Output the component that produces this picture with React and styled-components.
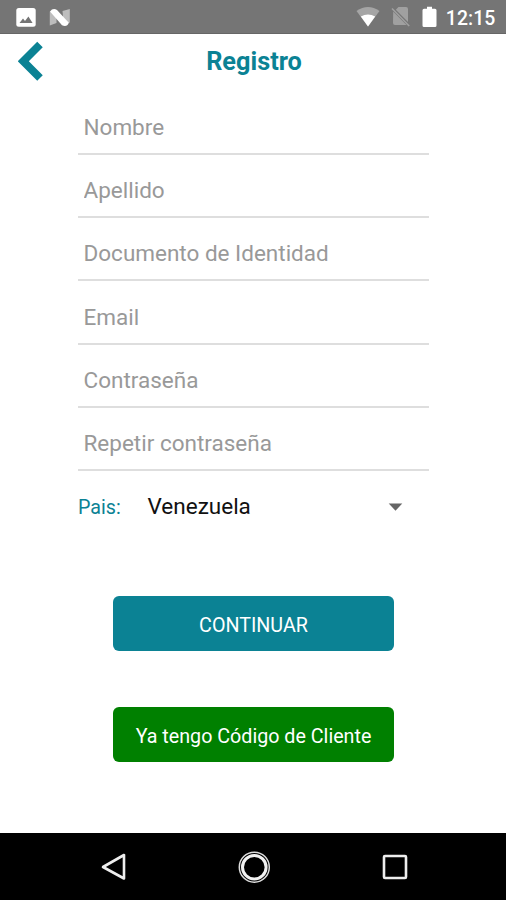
import React, { useState } from 'react';
import styled, { createGlobalStyle } from 'styled-components';

const teal = '#0b8294';

const GlobalStyle = createGlobalStyle`
  * { box-sizing: border-box; }
  body { margin: 0; background: #fff; font-family: Roboto, sans-serif; }
`;

const Screen = styled.div`
  width: 506px;
  height: 900px;
  display: flex;
  flex-direction: column;
  background: #fff;
  overflow: hidden;
`;

const StatusBar = styled.div`
  height: 34px;
  flex: none;
  display: flex;
  align-items: center;
  justify-content: space-between;
  padding: 0 10.500px 0 16px;
  background: #757575;
  border-bottom: 1px solid #666;
`;

const StatusGroup = styled.div`
  display: flex;
  align-items: center;
  gap: ${(p) => p.$gap}px;
`;

const Clock = styled.span`
  color: #fff;
  font-size: 19.4px;
  font-weight: 500;
  line-height: 22px;
  letter-spacing: 0.1px;
  margin: 4px 0 0 -2.500px;
`;

const Icon = styled.svg`
  display: block;
  flex: none;
`;

const Header = styled.header`
  height: 57.6px;
  flex: none;
  display: grid;
  grid-template-columns: 78px 1fr 78px;
`;

const BackButton = styled.button`
  border: 0;
  background: none;
  padding: 7px 0 0 18px;
  display: flex;
  align-items: flex-start;
`;

const Title = styled.h1`
  margin: 13px 0 0 2px;
  text-align: center;
  color: ${teal};
  font-size: 25.3px;
  font-weight: 700;
  line-height: 30px;
`;

const Form = styled.form`
  flex: 1;
  padding: 0 77px 0 78px;
  display: flex;
  flex-direction: column;
`;

const Field = styled.input`
  width: 100%;
  height: 63.3px;
  flex: none;
  border: 0;
  border-bottom: 2px solid #dedede;
  padding: 9px 5.5px 0;
  outline: none;
  background: transparent;
  color: #000;
  font: 400 22.5px Roboto, sans-serif;
  &::placeholder { color: #999; opacity: 1; }
`;

const CountryRow = styled.div`
  height: 72px;
  flex: none;
  display: flex;
  align-items: center;
`;

const Label = styled.span`
  width: 69.500px;
  color: ${teal};
  font-size: 19.7px;
  line-height: 26px;
  padding-top: 2px;
`;

const CountryValue = styled.span`
  flex: 1;
  color: #111;
  font-size: 22.5px;
  line-height: 28px;
  margin-top: -2px;
`;

const Caret = styled.svg`
  display: block;
  margin: -1px 26px 0 0;
`;

const Button = styled.button`
  width: 281px;
  height: 54.500px;
  flex: none;
  align-self: center;
  margin: ${(p) => p.$top}px 0 0;
  padding: 3px 0 0;
  border: 0;
  border-radius: 6px;
  background: ${(p) => p.$color};
  color: #fff;
  font: 400 19.7px Roboto, sans-serif;
`;

const NavBar = styled.nav`
  height: 67px;
  flex: none;
  display: flex;
  align-items: center;
  justify-content: space-between;
  padding: 0 98.500px;
  background: #000;
`;

const fields = ['Nombre', 'Apellido', 'Documento de Identidad', 'Email', 'Contraseña', 'Repetir contraseña'];

function ImageIcon() {
  return (
    <Icon width="20" height="20" viewBox="0 0 20 20">
      <rect x="0.3" y="0.9" width="19.4" height="18.8" rx="2.5" fill="#fff" />
      <path d="M3.5 16 7 11.500l2 2.400 3.400-4.300 4.200 6.400z" fill="#757575" />
    </Icon>
  );
}

function NIcon() {
  return (
    <Icon width="22" height="20" viewBox="0 0 22 20">
      <path d="M0.800 4.500 7.500 3.500v12.500l-6.700 2.600zM13.500 4 20.800 2v13.500l-6 2.500z" fill="#bdbdbd" />
      <path d="M1 4.500Q4 .5 8 3L19.800 15.800Q18 20.500 13 18.300z" fill="#fff" />
    </Icon>
  );
}

function WifiIcon() {
  return (
    <Icon width="24" height="21" viewBox="0 0 24 21">
      <path d="M0.500 5Q12-3 23.500 5L12 20.500z" fill="#a5a5a5" />
      <path d="M4.800 10.500Q12 6.300 19.200 10.500L12 20.500z" fill="#fff" />
    </Icon>
  );
}

function NoSimIcon() {
  return (
    <Icon width="20" height="21" viewBox="0 0 20 21">
      <path d="M7.500 1H15q2 0 2 2v13L4.800 3.700zM2.200 5.500 15.500 19H4q-2 0-2-2z" fill="#a0a0a0" />
      <path d="M1 2.500 18.200 20" stroke="#a0a0a0" strokeWidth="1.500" />
    </Icon>
  );
}

function BatteryIcon() {
  return (
    <Icon width="15" height="22" viewBox="0 0 15 22">
      <path d="M5 .800h5v2h3q1.500 0 1.500 1.500v15.200q0 1.500-1.500 1.500H2q-1.500 0-1.500-1.500V4.300q0-1.500 1.500-1.500h3z" fill="#fff" />
    </Icon>
  );
}

export default function App() {
  const [values, setValues] = useState({});
  return (
    <>
      <GlobalStyle />
      <Screen>
        <StatusBar>
          <StatusGroup $gap={13}>
            <ImageIcon />
            <NIcon />
          </StatusGroup>
          <StatusGroup $gap={11}>
            <WifiIcon />
            <NoSimIcon />
            <BatteryIcon />
            <Clock>12:15</Clock>
          </StatusGroup>
        </StatusBar>
        <Header>
          <BackButton aria-label="Volver">
            <Icon width="28" height="40" viewBox="0 0 28 40">
              <path d="M22 3.500 5.300 20.200 22 36.900" fill="none" stroke={teal} strokeWidth="7.800" />
            </Icon>
          </BackButton>
          <Title>Registro</Title>
        </Header>
        <Form onSubmit={(e) => e.preventDefault()}>
          {fields.map((name) => (
            <Field
              key={name}
              placeholder={name}
              value={values[name] || ''}
              onChange={(e) => setValues({ ...values, [name]: e.target.value })}
            />
          ))}
          <CountryRow>
            <Label>Pais:</Label>
            <CountryValue>Venezuela</CountryValue>
            <Caret width="15" height="8" viewBox="0 0 15 8">
              <path d="M.700 .500h13.600L7.500 7.700z" fill="#666" />
            </Caret>
          </CountryRow>
          <Button $top={53} $color={teal}>CONTINUAR</Button>
          <Button $top={56.5} $color="#008000">Ya tengo Código de Cliente</Button>
        </Form>
        <NavBar>
          <Icon width="28" height="30" viewBox="0 0 28 30">
            <path d="M25 3v23.500L4 15z" fill="none" stroke="#eee" strokeWidth="2.600" strokeLinejoin="round" />
          </Icon>
          <Icon width="34" height="34" viewBox="0 0 34 34">
            <circle cx="17.300" cy="17.200" r="15" fill="none" stroke="#ddd" strokeWidth="1.500" />
            <circle cx="17.300" cy="17.200" r="11.800" fill="none" stroke="#f2f2f2" strokeWidth="3" />
          </Icon>
          <Icon width="26" height="26" viewBox="0 0 26 26">
            <rect x="2" y="2" width="22" height="22" rx="1" fill="none" stroke="#eee" strokeWidth="2.600" />
          </Icon>
        </NavBar>
      </Screen>
    </>
  );
}
